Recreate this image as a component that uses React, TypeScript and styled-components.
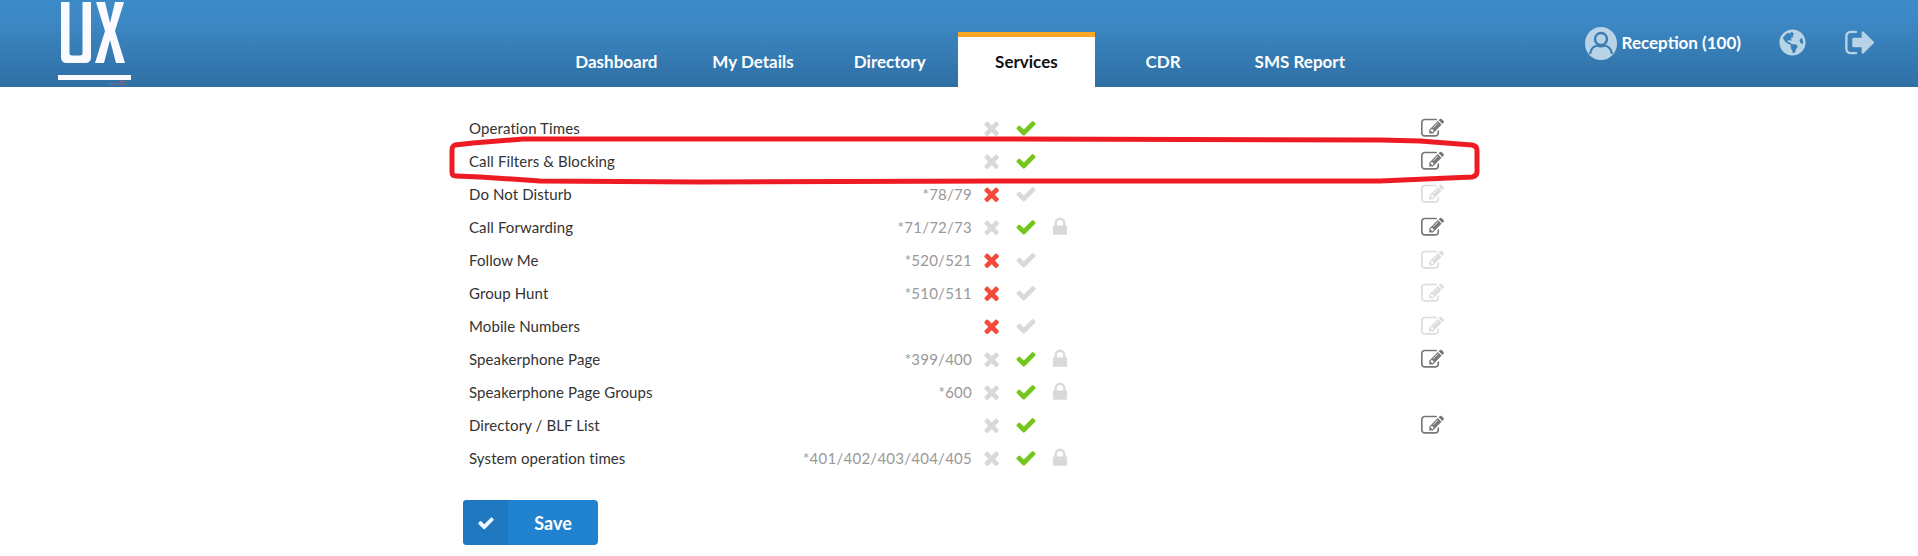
import { createGlobalStyle } from 'styled-components'
import styled from 'styled-components'
import { FaGlobeAmericas } from 'react-icons/fa'

const ICONS = {
  check:
    'M1671 566q0 40-28 68l-724 724-136 136q-28 28-68 28t-68-28l-136-136-362-362q-28-28-28-68t28-68l136-136q28-28 68-28t68 28l294 295 656-657q28-28 68-28t68 28l136 136q28 28 28 68z',
  times:
    'M1298 1322q0 40-28 68l-136 136q-28 28-68 28t-68-28l-294-294-294 294q-28 28-68 28t-68-28l-136-136q-28-28-28-68t28-68l294-294-294-294q-28-28-28-68t28-68l136-136q28-28 68-28t68 28l294 294 294-294q28-28 68-28t68 28l136 136q28 28 28 68t-28 68l-294 294 294 294q28 28 28 68z',
  lock:
    'M640 768h512v-192q0-106-75-181t-181-75-181 75-75 181v192zm832 96v576q0 40-28 68t-68 28h-960q-40 0-68-28t-28-68v-576q0-40 28-68t68-28h32v-192q0-184 132-316t316-132 316 132 132 316v192h32q40 0 68 28t28 68z',
  edit:
    'M888 1184l116-116-152-152-116 116v56h96v96h56zm440-720q-16-16-33 1l-350 350q-17 17-1 33t33-1l350-350q17-17 1-33zm80 594v190q0 119-84.5 203.5t-203.5 84.5h-832q-119 0-203.5-84.5t-84.5-203.5v-832q0-119 84.5-203.5t203.5-84.5h832q63 0 117 25 15 7 18 23 3 17-9 29l-49 49q-14 14-32 8-23-6-45-6h-832q-66 0-113 47t-47 113v832q0 66 47 113t113 47h832q66 0 113-47t47-113v-126q0-13 9-22l64-64q15-15 35-7t20 29zm-96-738l288 288-672 672h-288v-288zm444 132l-92 92-288-288 92-92q28-28 68-28t68 28l152 152q28 28 28 68t-28 68z',
  signOut:
    'M704 1440q0 4 1 20t.5 26.5-3 23.5-10 19.5-20.5 6.5h-320q-119 0-203.5-84.5t-84.5-203.5v-704q0-119 84.5-203.5t203.5-84.5h320q13 0 22.5 9.5t9.5 22.5q0 4 1 20t.5 26.5-3 23.5-10 19.5-20.5 6.5h-320q-66 0-113 47t-47 113v704q0 66 47 113t113 47h312l11.5 1 11.5 3 8 5.5 7 9 2 13.5zm928-544q0 26-19 45l-544 544q-19 19-45 19t-45-19-19-45v-288h-448q-26 0-45-19t-19-45v-384q0-26 19-45t45-19h448v-288q0-26 19-45t45-19 45 19l544 544q19 19 19 45z',
}

const tabs = ['Dashboard', 'My Details', 'Directory', 'Services', 'CDR', 'SMS Report']

type Service = {
  name: string
  code?: string
  enabled: boolean
  locked?: boolean
  edit?: boolean
}

const services: Service[] = [
  { name: 'Operation Times', enabled: true, edit: true },
  { name: 'Call Filters & Blocking', enabled: true, edit: true },
  { name: 'Do Not Disturb', code: '*78/79', enabled: false, edit: true },
  { name: 'Call Forwarding', code: '*71/72/73', enabled: true, locked: true, edit: true },
  { name: 'Follow Me', code: '*520/521', enabled: false, edit: true },
  { name: 'Group Hunt', code: '*510/511', enabled: false, edit: true },
  { name: 'Mobile Numbers', enabled: false, edit: true },
  { name: 'Speakerphone Page', code: '*399/400', enabled: true, locked: true, edit: true },
  { name: 'Speakerphone Page Groups', code: '*600', enabled: true, locked: true },
  { name: 'Directory / BLF List', enabled: true, edit: true },
  { name: 'System operation times', code: '*401/402/403/404/405', enabled: true, locked: true },
]

function FaIcon({ d, size, color }: { d: string; size: number; color: string }) {
  return (
    <svg width={size} height={size} viewBox="0 0 1792 1792" fill={color}>
      <path d={d} />
    </svg>
  )
}

export default function App() {
  return (
    <Page>
      <GlobalStyle />
      <Header>
        <Logo width="74" height="87" viewBox="0 0 74 87">
          <path d="M3 2h8.500v51q0 2.500 2.500 2.500h8q2.500 0 2.500-2.500V2H33v55q0 6-6 6H9q-6 0-6-6z" fill="#fbfbff" />
          <path d="M38 2h9l5 21 5-21h9L57 31l10 32h-9l-6-23-6 23h-9l10-32z" fill="#fbfbff" />
          <rect x="0" y="75" width="73" height="5" fill="#fbfbff" />
          <rect x="51" y="83" width="20" height="2" fill="#56708f" />
          <rect x="62" y="81" width="6" height="1" fill="#b8566a" />
        </Logo>
        <Nav>
          {tabs.map((tab) => (
            <Tab key={tab} $active={tab === 'Services'}>
              {tab}
            </Tab>
          ))}
        </Nav>
        <UserArea>
          <UserBlock>
            <svg width="32" height="33" viewBox="0 0 32 33">
              <ellipse cx="16" cy="16.5" rx="16" ry="16.5" fill="#b9d3e6" />
              <circle cx="16" cy="12" r="6" fill="none" stroke="#3a7cb2" strokeWidth="2.4" />
              <path d="M5 27q1-7 7-8.5q4 2 8 0q6 1.500 7 8.500" fill="none" stroke="#3a7cb2" strokeWidth="2.2" />
            </svg>
            <UserName>Reception (100)</UserName>
          </UserBlock>
          <GlobeSlot>
            <FaGlobeAmericas size={27} color="#b9d3e6" />
          </GlobeSlot>
          <ExitSlot>
            <FaIcon d={ICONS.signOut} size={33} color="#b9d3e6" />
          </ExitSlot>
        </UserArea>
      </Header>

      <Main>
        <List>
          {services.map((s) => (
            <Row key={s.name}>
              <Name>{s.name}</Name>
              <Code>{s.code}</Code>
              <TimesCell>
                <FaIcon d={ICONS.times} size={22} color={s.enabled ? '#d9d9d9' : '#f44a3c'} />
              </TimesCell>
              <Cell>
                <FaIcon d={ICONS.check} size={22} color={s.enabled ? '#74c61c' : '#d9d9d9'} />
              </Cell>
              <Cell>{s.locked && <FaIcon d={ICONS.lock} size={22} color="#d9d9d9" />}</Cell>
              <EditCell>
                {s.edit && <FaIcon d={ICONS.edit} size={23} color={s.enabled ? '#777' : '#dcdcdc'} />}
              </EditCell>
            </Row>
          ))}
        </List>
        <SaveButton type="button">
          <SaveIcon>
            <FaIcon d={ICONS.check} size={18} color="#eef5fb" />
          </SaveIcon>
          <SaveLabel>Save</SaveLabel>
        </SaveButton>
      </Main>

      <Highlight width="1918" height="556" viewBox="0 0 1918 556">
        <path
          d="M473 143L455 145Q452 146 452 150V172Q452 176 456 176L480 177L540 181L700 182L1000 181L1380 181L1472 177Q1477 176 1477 172V150Q1477 146 1472 145L1420 141L1380 140L1000 139L700 139L523 139Z"
          fill="none"
          stroke="#ed1c24"
          strokeWidth="5"
        />
      </Highlight>
    </Page>
  )
}

const GlobalStyle = createGlobalStyle`
  html, body {
    margin: 0;
    padding: 0;
    background: #fff;
    font-family: Lato, "Open Sans", sans-serif;
  }
`

const Page = styled.div`
  position: relative;
  width: 1918px;
  height: 556px;
  overflow: hidden;
`

const Header = styled.header`
  display: flex;
  height: 87px;
  background: linear-gradient(to bottom, #3d8ac8 0%, #3d89c6 20%, #2f6fa4 100%);
`

const Logo = styled.svg`
  flex: none;
  margin-left: 58px;
  display: block;
`

const Nav = styled.nav`
  display: grid;
  grid-template-columns: repeat(6, 136.7px);
  align-self: flex-end;
  margin-left: 416px;
  align-items: end;
`

const Tab = styled.a<{ $active?: boolean }>`
  display: flex;
  align-items: center;
  justify-content: center;
  box-sizing: border-box;
  height: 55px;
  padding-bottom: 2px;
  font-size: 17px;
  font-weight: 700;
  color: ${({ $active }) => ($active ? '#111' : '#fff')};
  background: ${({ $active }) => ($active ? '#fff' : 'transparent')};
  border-top: 5px solid ${({ $active }) => ($active ? '#fca625' : 'transparent')};
`

const UserArea = styled.div`
  display: flex;
  margin-left: auto;
  padding-right: 41px;
  align-items: flex-start;
`

const UserBlock = styled.div`
  display: flex;
  align-items: center;
  gap: 5px;
  padding-top: 27px;
`

const UserName = styled.span`
  margin-bottom: 2px;
  font-size: 17px;
  font-weight: 700;
  color: #fff;
`

const GlobeSlot = styled.div`
  display: flex;
  margin-left: 38px;
  padding-top: 29px;
`

const ExitSlot = styled.div`
  display: flex;
  margin-left: 38px;
  padding-top: 26px;
`

const Main = styled.main`
  width: 980px;
  margin: 0 auto;
  padding-top: 24px;
`

const List = styled.div`
  display: flex;
  flex-direction: column;
`

const Row = styled.div`
  display: grid;
  grid-template-columns: 240px 266px 34px 34px 34px 1fr;
  align-items: center;
  height: 33px;
  font-size: 15px;
`

const Name = styled.div`
  color: #333;
  letter-spacing: 0.1px;
  white-space: nowrap;
`

const Code = styled.div`
  color: #999;
  letter-spacing: 0.25px;
  text-align: right;
  padding-right: 3px;
  white-space: nowrap;
`

const Cell = styled.div`
  display: flex;
  justify-content: center;
`

const TimesCell = styled(Cell)`
  padding-left: 4px;
`

const EditCell = styled.div`
  display: flex;
  justify-content: flex-end;
  padding: 1px 5px 0 0;
`

const SaveButton = styled.button`
  display: flex;
  align-items: stretch;
  width: 135px;
  height: 45px;
  margin: 26px 0 0 -6px;
  padding: 0;
  border: 0;
  border-radius: 4px;
  overflow: hidden;
  background: #2182d0;
  color: #fff;
  font-family: inherit;
`

const SaveIcon = styled.span`
  display: flex;
  align-items: center;
  justify-content: center;
  width: 45px;
  background: #1e77bf;
`

const SaveLabel = styled.span`
  flex: 1;
  align-self: center;
  font-size: 18px;
  font-weight: 700;
  text-align: center;
`

const Highlight = styled.svg`
  position: absolute;
  left: 0;
  top: 0;
  pointer-events: none;
`
